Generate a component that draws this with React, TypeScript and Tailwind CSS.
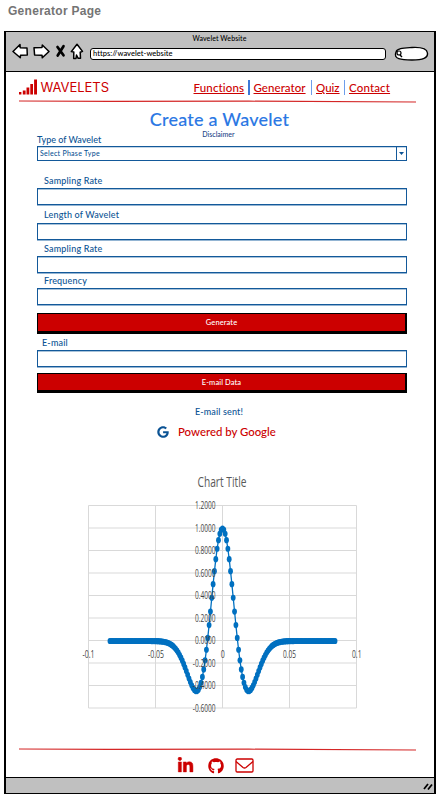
import React from "react";
import { FaLinkedinIn, FaGoogle, FaGithub } from "react-icons/fa";

function Field({ label, gap, indent = "pl-[7px]", labelBox = "h-[14px] leading-[14px]" }: { label: string; gap: string; indent?: string; labelBox?: string }) {
  return (
    <label className={`block ${gap}`}>
      <span className={`block text-[9px] font-medium tracking-[0.17px] whitespace-nowrap text-[#0b5394] ${indent} ${labelBox}`}>
        {label}
      </span>
      <span className="block h-[17px] w-[369.5px] border border-[#13599a] bg-white shadow-[0_1px_0_#94b5d3,inset_0_1px_0_#a9c3da]" />
    </label>
  );
}

function RedButton({ children, size }: { children: string; size: string }) {
  return (
    <button
      className={`block w-[370px] border border-t-[1px] border-r-[2px] border-b-[3px] border-l-[1px] border-black bg-[#cc0000] pt-[1px] text-center text-[7.5px] font-medium tracking-[0.1px] text-white ${size}`}
    >
      {children}
    </button>
  );
}

function RedRule() {
  return (
    <svg className="block h-[3px] w-[397px]" viewBox="0 0 397 3" fill="none">
      <path d="M0 1 L90 1.4 L230 1.2 L397 2" stroke="#cc0000" strokeWidth="1.2" opacity=".85" />
    </svg>
  );
}

function Toolbar() {
  return (
    <header className="flex h-[40px] border-b-[1.5px] border-black bg-[#c0c0c0]">
      <svg className="mt-[8px] ml-[6px] h-[24px] w-[76px] shrink-0" viewBox="12 40 76 24" fill="white" stroke="black" strokeWidth="1.5" strokeLinejoin="round">
        <path d="M13 51.5 20 44.5 20.2 47.8 27 48 27.3 55 20.5 55.2 20.3 57.8Z" />
        <path d="M49 51.5 42.3 45 42 47.5 34 47.8 34.6 55 42 55.2 42.3 57.8Z" />
        <path d="M57.5 47 63.5 55.3M63.5 46.2 57.7 55.5" strokeWidth="2.7" strokeLinecap="round" />
        <path d="M77 44.3 71.3 51.6 73.8 52 73.7 58.4 76 58.5 76.5 55 78.2 58.3 80.5 58.2 80.2 52.3 82.5 51.4Z" />
      </svg>
      <div className="flex w-[300px] flex-col items-center pr-[37px]">
        <span className="mt-[2px] h-[9px] text-[7px] leading-[9px] font-medium tracking-[0.1px] whitespace-nowrap text-black">Wavelet Website</span>
        <div className="mt-[5px] ml-[37px] h-[12px] w-[296px] shrink-0 rounded-[3px] border-[1.5px] border-black bg-white pl-[2px] text-[7.5px] leading-[10px] font-medium tracking-[0.05px] text-black">
          https://wavelet-website
        </div>
      </div>
      <svg className="mt-[13px] ml-[5px] h-[17px] w-[36px] shrink-0" viewBox="394 45 36 17" fill="none" stroke="black">
        <path d="M397 52C398 48 405 48 413 47.5C423 47 428 49 428.5 53C429 58 424 60 413 60C402 60 394 59 397 52Z" fill="white" strokeWidth="1.4" />
        <circle cx="400" cy="53" r="2" strokeWidth="1.2" />
        <path d="m401 55 2 2" strokeWidth="1.5" />
      </svg>
    </header>
  );
}

const samples = Array.from({ length: 169 }, (_, i) => {
  const t = (i - 84) / 1000;
  const a = (Math.PI * 20 * t) ** 2;
  return [222.5 + t * 1340, 641 - 112.5 * (1 - 2 * a) * Math.exp(-a)];
});

function Chart() {
  return (
    <svg className="block h-[250px] w-[300px]" viewBox="70 467 300 250" fontFamily="'Open Sans', sans-serif">
      <g stroke="#d9d9d9" strokeWidth="1">
        {Array.from({ length: 10 }, (_, i) => (
          <path key={i} d={`M88.5 ${505.5 + i * 22.5}H356.5`} />
        ))}
        {[88.5, 155.5, 222.5, 289.5, 356.5].map((x) => (
          <path key={x} d={`M${x} 505.5V708`} />
        ))}
      </g>
      <text x="197.5" y="486.5" fontSize="15" fill="#595959" textLength="49" lengthAdjust="spacingAndGlyphs">Chart Title</text>
      <g fill="none" stroke="#0070c0" strokeWidth="1.3">
        <path d={"M" + samples.map((p) => p.join(" ")).join("L")} />
      </g>
      <g fill="#0070c0">
        {samples.map(([x, y], i) => (
          <ellipse key={i} cx={x} cy={y} rx="2.4" ry="3.1" />
        ))}
      </g>
      <g fill="#444" fontSize="10">
        {["1.2000", "1.0000", "0.8000", "0.6000", "0.4000", "0.2000", "0.0000", "-0.2000", "-0.4000", "-0.6000"].map((s, i) => (
          <text key={s} x={i > 6 ? 192.8 : 195} y={509 + i * 22.5} textLength={i > 6 ? 22.7 : 20.5} lengthAdjust="spacingAndGlyphs">{s}</text>
        ))}
        <text x="82.5" y="657.5" textLength="12" lengthAdjust="spacingAndGlyphs">-0.1</text>
        <text x="148" y="657.5" textLength="16" lengthAdjust="spacingAndGlyphs">-0.05</text>
        <text x="220.7" y="657.5" textLength="4" lengthAdjust="spacingAndGlyphs">0</text>
        <text x="283" y="657.5" textLength="13" lengthAdjust="spacingAndGlyphs">0.05</text>
        <text x="352" y="657.5" textLength="9.5" lengthAdjust="spacingAndGlyphs">0.1</text>
      </g>
    </svg>
  );
}

export default function App() {
  return (
    <div className="h-[800px] w-[443px] overflow-hidden bg-white font-['Lato',sans-serif]">
      <h1 className="h-[31px] pt-[3px] pl-[8px] font-['Liberation_Sans',sans-serif] text-[12px] leading-[16px] font-bold tracking-[0.28px] text-[#747474]">
        Generator Page
      </h1>
      <div className="ml-[4px] flex h-[763px] w-[432px] flex-col border-y border-r-2 border-l-2 border-black">
        <Toolbar />
        <main className="min-h-0 flex-1 bg-white">
          <div className="flex h-[28px] items-center pt-[3px] pl-[13px] text-[#cc0000]">
            <svg className="h-[17px] w-[18px]" viewBox="0 0 18 17" fill="#cc0000">
              <path d="M0 13h2.4v2.5H0zM3.8 11.5h2.8v4H3.8zM7.5 8.5h2.8v7H7.5zM11.3 5H14v10.5h-2.7zM15.1 .5H18v15h-2.9z" />
            </svg>
            <span className="ml-[3.5px] w-[153px] font-['Inter',sans-serif] text-[13px] leading-[17px] tracking-[-0.05px]">WAVELETS</span>
            <nav className="flex items-center text-[11.5px] leading-[15px] font-medium tracking-[0.15px] whitespace-nowrap">
              <a className="w-[49.5px] underline">Functions</a>
              <span className="mr-[4px] ml-[5px] h-[15px] w-[1.5px] bg-[#3c78d8]" />
              <a className="w-[52.5px] tracking-[0.05px] underline">Generator</a>
              <span className="mr-[4px] ml-[4.5px] h-[15px] w-[1.5px] bg-[#6d9eeb]" />
              <a className="w-[23px] tracking-normal underline">Quiz</a>
              <span className="mr-[4px] ml-[4.5px] h-[15px] w-[1.5px] bg-[#6d9eeb]" />
              <a className="underline">Contact</a>
            </nav>
          </div>
          <div className="pl-[13px]"><RedRule /></div>
          <section className="pl-[31px]">
            <div className="w-[369px]">
              <h2 className="mt-[6px] h-[22px] pr-[4px] text-center text-[18px] leading-[21px] font-medium tracking-[0.22px] text-[#2b78e4] [-webkit-text-stroke:0.1px_#2b78e4]">Create a Wavelet</h2>
              <p className="h-[7px] pr-[6px] text-center text-[7px] leading-[6px] font-medium text-[#1c4587]">Disclaimer</p>
              <label className="block">
                <span className="block h-[8px] text-[9px] leading-[3px] font-medium text-[#0b5394]">Type of Wavelet</span>
                <span className="flex h-[15px] w-[369.5px] border border-[#13599a] text-[7px] leading-[12px] font-medium tracking-[0.27px] text-[#0b5394] shadow-[inset_0_1px_0_#c4d6e6]">
                  <span className="flex-1 pl-[2px]">Select Phase Type</span>
                  <span className="flex w-[10px] items-center justify-center border-l border-[#13599a]">
                    <svg className="h-[3px] w-[5px]" viewBox="0 0 5 3" fill="#0b5394"><path d="M0 0h5L2.5 3z" /></svg>
                  </span>
                </span>
              </label>
              <Field label="Sampling Rate" gap="mt-[13px]" />
              <Field label="Length of Wavelet" gap="mt-[3px]" labelBox="h-[15px] leading-[14px]" />
              <Field label="Sampling Rate" gap="mt-[2px]" />
              <Field label="Frequency" gap="mt-[1px]" labelBox="h-[14px] leading-[14px]" />
              <div className="mt-[8px]"><RedButton size="h-[21px]">Generate</RedButton></div>
              <Field label="E-mail" gap="mt-[2px]" indent="pl-[5px]" labelBox="h-[14px] leading-[14px]" />
              <div className="mt-[6px]"><RedButton size="h-[20px]">E-mail Data</RedButton></div>
              <p className="mt-[12px] h-[14px] pr-[5px] text-center text-[9px] leading-[14px] font-medium tracking-[0.15px] text-[#0b5394]">E-mail sent!</p>
              <p className="mt-[5px] flex h-[16px] items-center pl-[120px] text-[11.4px] leading-[16px] font-medium text-[#cc0000]">
                <FaGoogle className="mr-[9px] size-[12px] text-[#0b5394]" />Powered by Google
              </p>
            </div>
          </section>
          <div className="mt-[27px] ml-[64px]"><Chart /></div>
          <div className="mt-[31px] pl-[13px]"><RedRule /></div>
          <div className="mt-[6px] flex items-center pl-[171px] text-[#cc0000]">
            <FaLinkedinIn className="size-[17px]" stroke="#cc0000" strokeWidth="14" />
            <FaGithub className="ml-[14px] size-[16px]" />
            <svg className="ml-[11px] h-[17px] w-[20px]" viewBox="0 0 20 17" fill="none" stroke="#cc0000" strokeWidth="1.3">
              <rect x="1" y="2" width="17" height="13" rx="1.2" />
              <path d="m1 4.5 7 6q1.5 1 3 0l7-6" />
            </svg>
          </div>
        </main>
        <footer className="flex h-[16px] justify-end border-t-[1.5px] border-black bg-[#c0c0c0]">
          <svg className="h-[14px] w-[14px]" viewBox="0 0 14 14" fill="none" stroke="black" strokeWidth="1.8">
            <path d="m4 11 4-5M8 11.5l4-5" />
          </svg>
        </footer>
      </div>
    </div>
  );
}
